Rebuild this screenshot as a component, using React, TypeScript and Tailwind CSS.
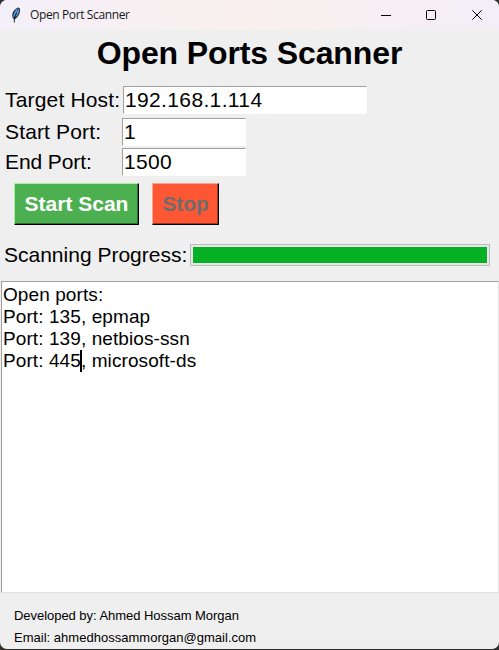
import type { ReactNode } from "react";

const openPorts = [
  { port: 135, service: "epmap" },
  { port: 139, service: "netbios-ssn" },
  { port: 445, service: "microsoft-ds" },
];

function Feather() {
  return (
    <svg width="12" height="18" viewBox="0 0 12 18" className="shrink-0">
      <path d="M8.6 1.4 C10.8 2 10.4 6 8.8 9 C7.8 11.2 6 12.8 4.2 13.4 C1.4 11.5 2 7 4 4.6 C5.4 2.8 7 1.7 8.6 1.4Z" fill="#26313d" />
      <path d="M8.4 2.3 C6 3 3.4 6.4 3.2 11.4 L5 10 L8.4 2.3Z" fill="#4b96e8" />
      <path d="M8.9 2.8 C9.8 5 8.2 9 5.2 11.8 L6 8.5Z" fill="#6ba6e6" />
      <path d="M6.6 7 L4.4 12.5 L4.3 16.5" fill="none" stroke="#111820" strokeWidth="0.9" />
    </svg>
  );
}

function TitleBar() {
  return (
    <header className="flex h-[30px] shrink-0 items-center justify-between bg-gradient-to-r from-[#f4f0f9] via-[#f9f0ee] to-[#f3eef7] pl-[10px] pr-[17px]">
      <div className="flex items-center gap-2">
        <Feather />
        <span className="whitespace-nowrap font-['Open_Sans',sans-serif] text-[12px] tracking-[-0.38px] text-[#191919]">Open Port Scanner</span>
      </div>
      <div className="flex items-center gap-[35px] text-black">
        <svg width="10" height="10" viewBox="0 0 10 10" className="-ml-px mr-px"><path d="M0 5.5H10" stroke="currentColor" /></svg>
        <svg width="10" height="10" viewBox="0 0 10 10" className="-ml-px mr-px"><rect x="0.5" y="0.5" width="9" height="9" rx="1" fill="none" stroke="currentColor" /></svg>
        <svg width="10" height="10" viewBox="0 0 10 10"><path d="M0.3 0.3L9.7 9.7M9.7 0.3L0.3 9.7" stroke="currentColor" /></svg>
      </div>
    </header>
  );
}

function Entry({ className, children }: { className: string; children: ReactNode }) {
  return (
    <div className={`h-[28px] border border-b-white border-l-[#a0a0a0] border-r-white border-t-[#a0a0a0] bg-white leading-[26px] tracking-[0.36px] ${className}`}>
      {children}
    </div>
  );
}

export default function App() {
  return (
    <div className="h-[650px] w-[499px] bg-[#303030]">
      <div className="flex h-[649px] flex-col overflow-hidden rounded-[7px] bg-[#efefef] font-['Liberation_Sans',Arial,sans-serif] text-[21px] text-black">
        <TitleBar />
        <h1 className="h-[56px] pt-[4px] text-center text-[32px] font-bold leading-[38px] tracking-[-0.12px]">Open Ports Scanner</h1>
        <div className="flex h-[32px] pl-[5px]">
          <label className="w-[118px] whitespace-nowrap leading-[28px] tracking-[0.17px]">Target Host:</label>
          <Entry className="w-[244px] pl-[1px]">192.168.1.114</Entry>
        </div>
        <div className="flex h-[30px] pl-[5px]">
          <label className="w-[117px] leading-[28px] tracking-[0.15px]">Start Port:</label>
          <Entry className="w-[124px] pl-[1px]">1</Entry>
        </div>
        <div className="flex h-[35px] pl-[5px]">
          <label className="w-[117px] leading-[28px] tracking-[-0.1px]">End Port:</label>
          <Entry className="w-[124px] pl-[1px]">1500</Entry>
        </div>
        <div className="flex h-[61px] gap-[13px] pl-[14px] font-bold">
          <button className="h-[42px] w-[125px] border border-b-black border-l-[#a5f0a5] border-r-black border-t-[#a5f0a5] bg-[#4caf50] leading-[40px] text-white shadow-[inset_-1px_-1px_0_#2d6b30]">Start Scan</button>
          <button className="h-[42px] w-[67px] border border-b-black border-l-[#ffa28e] border-r-black border-t-[#ffa28e] bg-[#ff5733] leading-[40px] text-[#6d6d6d] shadow-[inset_-1px_-1px_0_#9b351f]">Stop</button>
        </div>
        <div className="flex h-[37px] pl-[4px]">
          <span className="w-[186px] whitespace-nowrap leading-[22px]">Scanning Progress:</span>
          <div className="h-[22px] w-[300px] border border-[#bcbcbc] bg-[#e6e6e6] p-[2px]">
            <div className="h-full w-[294px] bg-[#06b025]" />
          </div>
        </div>
        <div className="ml-[1px] h-[312px] border border-b-[#e3e3e3] border-l-[#a0a0a0] border-r-[#e3e3e3] border-t-[#a0a0a0] bg-white pl-[1px] pt-[2px] text-[19px] leading-[22px] tracking-[0.09px]">
          <p>Open ports:</p>
          {openPorts.map(({ port, service }) => (
            <p key={port} className="flex whitespace-pre">
              <span>Port: {port}</span>
              {port === 445 && <span className="-ml-[1px] -mr-[1px] h-[22px] w-[2px] bg-black" />}
              <span>, {service}</span>
            </p>
          ))}
        </div>
        <footer className="pl-[14px] pt-[12px] text-[13px] leading-[22px]">
          <p className="tracking-[-0.04px]">Developed by: Ahmed Hossam Morgan</p>
          <p className="tracking-[0.02px]">Email: ahmedhossammorgan@gmail.com</p>
        </footer>
      </div>
    </div>
  );
}
